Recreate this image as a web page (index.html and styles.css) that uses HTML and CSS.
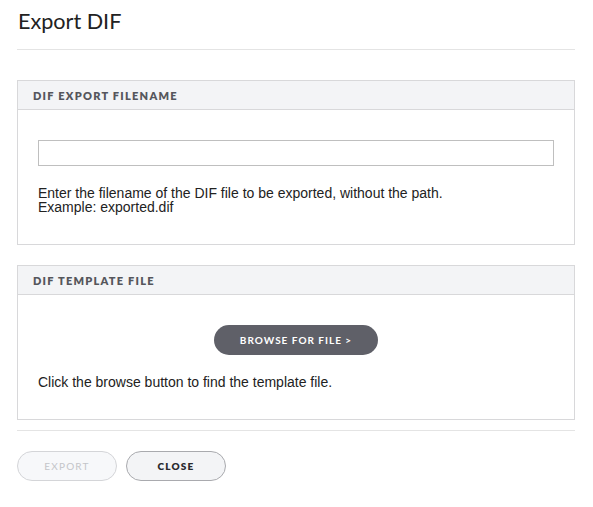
FILE: index.html
```html
<!DOCTYPE html>
<html>
<head>
<meta charset="utf-8">
<link rel="stylesheet" href="styles.css">
</head>
<body>
<div class="dialog">
  <h1 class="title">Export DIF</h1>
  <div class="content">
    <section class="panel">
      <div class="panel-head">DIF EXPORT FILENAME</div>
      <div class="panel-body panel-body-a">
        <input class="text-input" type="text">
        <p class="help">Enter the filename of the DIF file to be exported, without the path.<br>Example: exported.dif</p>
      </div>
    </section>
    <section class="panel">
      <div class="panel-head">DIF TEMPLATE FILE</div>
      <div class="panel-body panel-body-b">
        <div class="browse-row"><button class="btn-browse">BROWSE FOR FILE &gt;</button></div>
        <p class="help">Click the browse button to find the template file.</p>
      </div>
    </section>
  </div>
  <div class="footer">
    <button class="btn btn-disabled">EXPORT</button>
    <button class="btn btn-close">CLOSE</button>
  </div>
</div>
</body>
</html>
```

FILE: styles.css
```css
html, body { margin: 0; padding: 0; background: #fff; }
body { font-family: "Liberation Sans", Arial, sans-serif; color: #222; }
.dialog { padding: 0 18px 0 17px; width: 558px; }
.title {
  margin: 0;
  font-family: Lato, "Liberation Sans", sans-serif;
  font-weight: 400;
  font-size: 21.6px;
  color: #222;
  padding: 8px 0 0 1px;
  height: 41px;
  line-height: 26px;
  border-bottom: 1px solid #e4e4e4;
}
.content { padding-top: 30px; display: flex; flex-direction: column; gap: 20px; }
.panel { border: 1px solid #d8d8da; }
.panel-head {
  background: #f3f4f6;
  border-bottom: 1px solid #d8d8da;
  height: 28px;
  line-height: 29px;
  padding-left: 15px;
  font-family: Lato, "Liberation Sans", sans-serif;
  font-weight: 800;
  font-size: 11px;
  letter-spacing: 1.25px;
  color: #55565c;
}
.panel-body { padding: 0 20px; }
.panel-body-a { padding-top: 30px; height: 104px; }
.panel-body-b { padding-top: 30px; height: 94px; }
.text-input {
  display: block;
  box-sizing: border-box;
  width: 100%;
  height: 26px;
  border: 1px solid #bfbfbf;
  margin: 0;
  padding: 0 4px;
  outline: none;
}
.help { margin: 0; font-size: 14px; line-height: 14px; color: #222; }
.panel-body-a .help { margin-top: 20px; }
.browse-row { display: flex; justify-content: center; }
.btn-browse {
  width: 164px;
  height: 30px;
  border: none;
  border-radius: 15px;
  background: #5f6068;
  color: #fff;
  font-family: Lato, "Liberation Sans", sans-serif;
  font-weight: 700;
  font-size: 10px;
  letter-spacing: 1px;
  padding: 0;
}
.panel-body-b .help { margin-top: 20px; }
.footer {
  margin-top: 10px;
  border-top: 1px solid #e4e4e4;
  padding-top: 20px;
  display: flex;
  gap: 9px;
}
.btn {
  width: 100px;
  height: 30px;
  border-radius: 15px;
  font-family: Lato, "Liberation Sans", sans-serif;
  font-size: 10px;
  letter-spacing: 1.2px;
  padding: 0;
}
.btn-disabled {
  background: #f7f8fa;
  border: 1px solid #d4d5d8;
  color: #c4c5c9;
  font-weight: 400;
}
.btn-close {
  background: #f3f4f6;
  border: 1px solid #a9aaae;
  color: #2a2a2e;
  font-weight: 800;
}
```
